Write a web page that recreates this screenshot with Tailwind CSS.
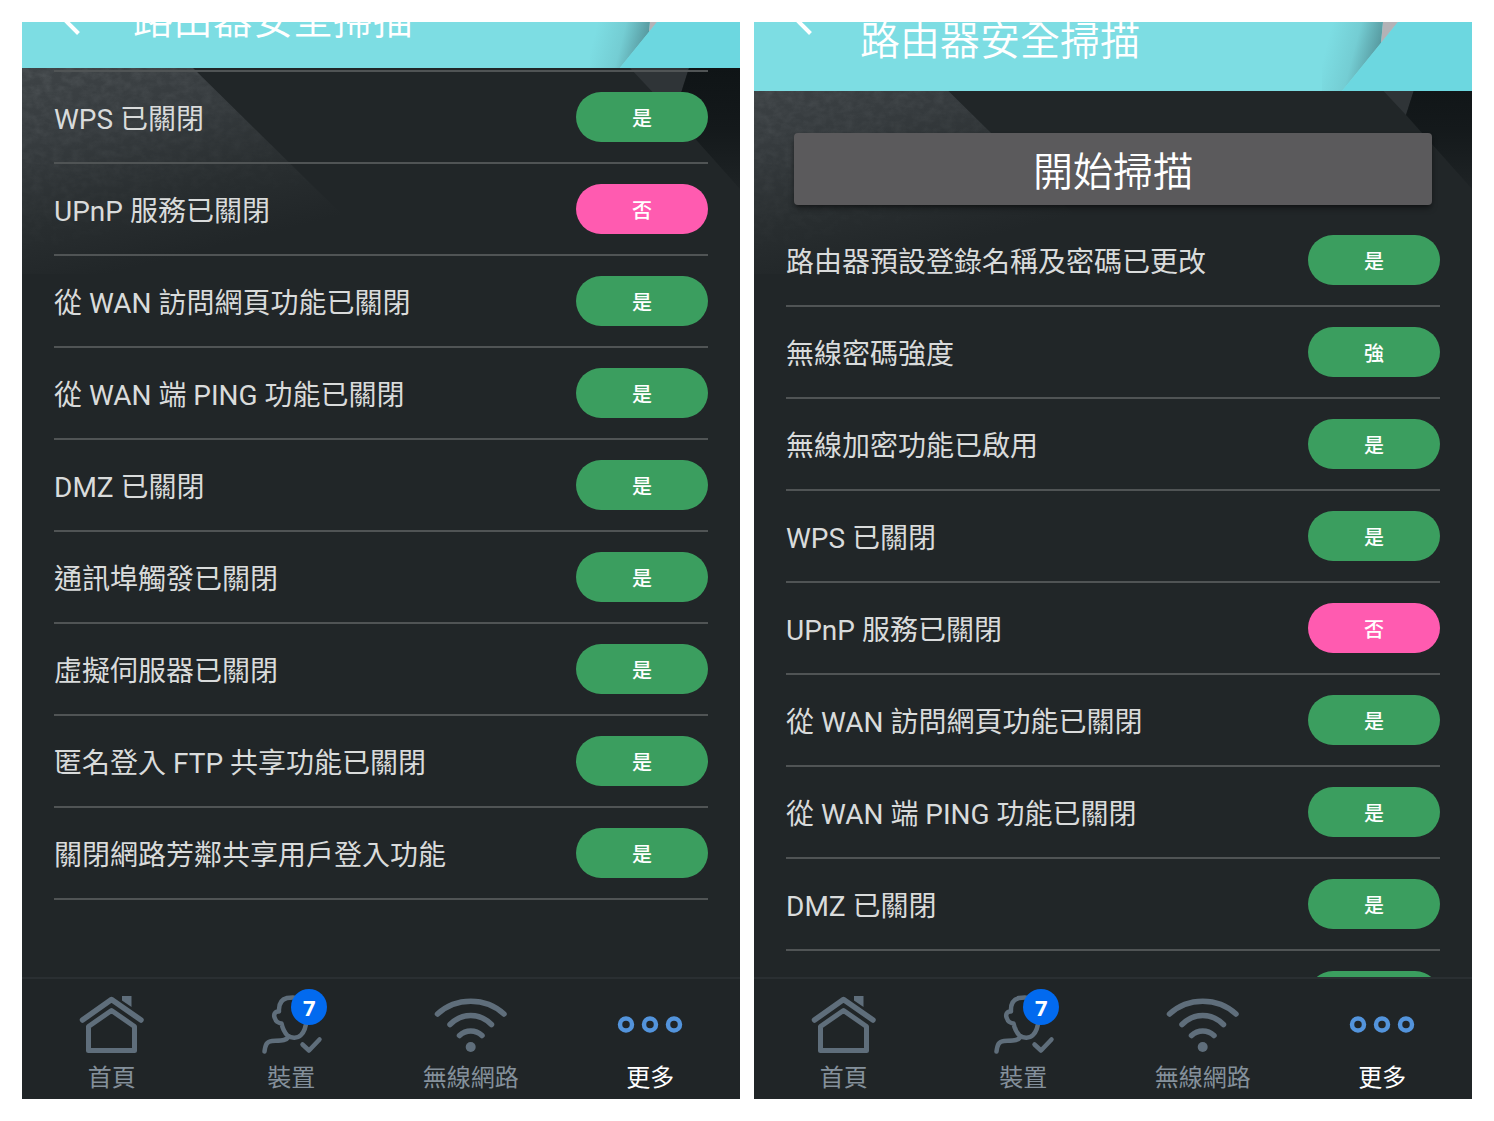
<!DOCTYPE html>
<html lang="zh-Hant">
<head>
<meta charset="utf-8">
<meta name="viewport" content="width=device-width, initial-scale=1">
<title>路由器安全掃描</title>
<script src="https://cdn.jsdelivr.net/npm/@tailwindcss/browser@4"></script>
</head>
<body class="bg-white font-[Roboto,'Noto_Sans_CJK_TC',sans-serif]">

<!-- Shared drawings -->
<svg class="absolute size-0" aria-hidden="true">
  <defs>
    <linearGradient id="sheen" gradientUnits="userSpaceOnUse" x1="0" y1="46" x2="54" y2="260">
      <stop offset="0" stop-color="#3e4346"/>
      <stop offset="0.35" stop-color="#363b3e"/>
      <stop offset="0.7" stop-color="#292e30"/>
      <stop offset="1" stop-color="#212628"/>
    </linearGradient>
    <linearGradient id="fade" gradientUnits="userSpaceOnUse" x1="0" y1="46" x2="54" y2="240">
      <stop offset="0" stop-color="#fff"/>
      <stop offset="1" stop-color="#fff" stop-opacity="0"/>
    </linearGradient>
    <linearGradient id="corner" x1="0" y1="0" x2="0" y2="1">
      <stop offset="0" stop-color="#0f1416"/>
      <stop offset="0.5" stop-color="#14191b"/>
      <stop offset="1" stop-color="#1e2325"/>
    </linearGradient>
    <linearGradient id="fold" gradientUnits="userSpaceOnUse" x1="8" y1="10" x2="62" y2="24">
      <stop offset="0" stop-color="#7ddde3"/>
      <stop offset="0.5" stop-color="#74cdd3"/>
      <stop offset="1" stop-color="#539298"/>
    </linearGradient>
    <!-- Fine stone grain, clipped to the shape it is applied to -->
    <filter id="grain" x="0" y="0" width="1" height="1">
      <feTurbulence type="fractalNoise" baseFrequency="0.1 0.14" numOctaves="4" seed="4"/>
      <feColorMatrix values="0 0 0 0 0.75  0 0 0 0 0.8  0 0 0 0 0.82  0.9 0 0 0 -0.3"/>
      <feComposite in2="SourceGraphic" operator="in"/>
    </filter>
    <symbol id="i-home" viewBox="0 0 80 64">
      <path d="M50 4h9.500v11l-9.500-6.500z" fill="currentColor"/>
      <g fill="none" stroke="currentColor" stroke-linecap="round" stroke-linejoin="round">
        <path stroke-width="5.500" d="M10.500 28 39.500 7.500 69 28"/>
        <path stroke-width="5" d="M16.500 58.500V34.500L39.500 18.500 62.500 34.500V58.500Z"/>
      </g>
    </symbol>
    <symbol id="i-user" viewBox="0 0 80 64">
      <g fill="none" stroke="currentColor" stroke-width="4.500" stroke-linecap="round" stroke-linejoin="round">
        <path d="M13.500 59.500C14.500 52 16 49.500 21 49 30 48.500 35 49 38 44.500"/>
        <path d="M53 8C48 5.500 42 5 36 6 30 7.500 27.500 12 28 19.500 24 19 22 22.500 24 26.500 25 30 27 31 30.500 31.500 31.500 36 33.500 40.500 36.500 43.500 40.500 46.500 46.500 46.500 50 43 53.500 39.500 55 35 55.500 28"/>
        <path d="M51.500 52.500 58 58.500 68.500 47.500"/>
      </g>
    </symbol>
    <symbol id="i-wifi" viewBox="0 0 80 64">
      <g fill="none" stroke="currentColor" stroke-width="5.500" stroke-linecap="round">
        <path d="M6.500 22C25 5 54.500 5 73 22"/>
        <path d="M19 32.500C31 20.500 48.500 20.500 60.500 32.500"/>
        <path d="M28.500 43.500C35 37.500 44.500 37.500 51 43.500"/>
      </g>
      <circle cx="39.700" cy="55" r="5" fill="currentColor"/>
    </symbol>
    <symbol id="i-more" viewBox="0 0 80 64">
      <g fill="none" stroke="currentColor" stroke-width="4.500">
        <circle cx="16" cy="32.500" r="6"/><circle cx="40" cy="32.500" r="6"/><circle cx="64" cy="32.500" r="6"/>
      </g>
    </symbol>
    <symbol id="slate" viewBox="0 0 718 1077">
      <path d="M0 46H171L348 220 380 252H0Z" fill="url(#sheen)"/>
      <path d="M0 46H171L348 220 380 252H0Z" fill="url(#fade)" filter="url(#grain)" opacity="0.18"/>
      <path d="M608 46H667L652 93Z" fill="#2f3437"/>
      <path d="M667 46H718V167L652 93Z" fill="url(#corner)"/>
    </symbol>
    <symbol id="banner" viewBox="0 0 150 69">
      <path d="M0 0H61L59 21 20 69H0Z" fill="url(#fold)"/>
      <path d="M61 0H76L59 21Z" fill="#b4b2b6"/>
      <path d="M76 0H150V69H20Z" fill="#6cd7e0"/>
    </symbol>
  </defs>
</svg>

<main class="grid h-screen grid-cols-2 gap-3.5 p-[22px]">

  <section class="relative isolate flex min-h-0 flex-col overflow-hidden bg-[#212628]">
    <svg class="absolute top-0 left-0 -z-10 w-full" viewBox="0 0 718 1077" aria-hidden="true"><use href="#slate"/></svg>
    <header class="relative flex h-[46px] shrink-0 items-start overflow-hidden bg-[#7ddde3] text-white">
      <svg class="absolute right-0 bottom-0 h-[46px] w-[150px]" viewBox="0 11 150 46" aria-hidden="true"><use href="#banner" width="150" height="69"/></svg>
      <a href="#" aria-label="返回" class="ml-8 block w-[79px]"><svg class="h-5 w-8" viewBox="0 0 32 20" fill="none" stroke="currentColor" stroke-width="4"><path d="M10-3 24.500 11.500"/></svg></a>
      <h1 class="relative -mt-[21px] text-[40px] leading-10 font-[350]">路由器安全掃描</h1>
    </header>
    <div class="min-h-0 flex-1 overflow-hidden">
      <ul class="mx-8 mt-0.5 border-t-2 border-[#505455] text-[28px] leading-9 text-[#d9dbdb]">
        <li class="flex h-[92px] items-center justify-between border-b-2 border-[#505455]"><span class="pt-1.5">WPS 已關閉</span><span class="flex h-[50px] w-[132px] items-center justify-center rounded-full bg-[#3b9e5f] pt-1 text-xl font-medium text-white">是</span></li>
        <li class="flex h-[92px] items-center justify-between border-b-2 border-[#505455]"><span class="pt-1.5">UPnP 服務已關閉</span><span class="flex h-[50px] w-[132px] items-center justify-center rounded-full bg-[#ff5bb0] pt-1 text-xl font-medium text-white">否</span></li>
        <li class="flex h-[92px] items-center justify-between border-b-2 border-[#505455]"><span class="pt-1.5">從 WAN 訪問網頁功能已關閉</span><span class="flex h-[50px] w-[132px] items-center justify-center rounded-full bg-[#3b9e5f] pt-1 text-xl font-medium text-white">是</span></li>
        <li class="flex h-[92px] items-center justify-between border-b-2 border-[#505455]"><span class="pt-1.5">從 WAN 端 PING 功能已關閉</span><span class="flex h-[50px] w-[132px] items-center justify-center rounded-full bg-[#3b9e5f] pt-1 text-xl font-medium text-white">是</span></li>
        <li class="flex h-[92px] items-center justify-between border-b-2 border-[#505455]"><span class="pt-1.5">DMZ 已關閉</span><span class="flex h-[50px] w-[132px] items-center justify-center rounded-full bg-[#3b9e5f] pt-1 text-xl font-medium text-white">是</span></li>
        <li class="flex h-[92px] items-center justify-between border-b-2 border-[#505455]"><span class="pt-1.5">通訊埠觸發已關閉</span><span class="flex h-[50px] w-[132px] items-center justify-center rounded-full bg-[#3b9e5f] pt-1 text-xl font-medium text-white">是</span></li>
        <li class="flex h-[92px] items-center justify-between border-b-2 border-[#505455]"><span class="pt-1.5">虛擬伺服器已關閉</span><span class="flex h-[50px] w-[132px] items-center justify-center rounded-full bg-[#3b9e5f] pt-1 text-xl font-medium text-white">是</span></li>
        <li class="flex h-[92px] items-center justify-between border-b-2 border-[#505455]"><span class="pt-1.5">匿名登入 FTP 共享功能已關閉</span><span class="flex h-[50px] w-[132px] items-center justify-center rounded-full bg-[#3b9e5f] pt-1 text-xl font-medium text-white">是</span></li>
        <li class="flex h-[92px] items-center justify-between border-b-2 border-[#505455]"><span class="pt-1.5">關閉網路芳鄰共享用戶登入功能</span><span class="flex h-[50px] w-[132px] items-center justify-center rounded-full bg-[#3b9e5f] pt-1 text-xl font-medium text-white">是</span></li>
      </ul>
    </div>
    <nav class="grid h-[122px] shrink-0 grid-cols-4 border-t-2 border-[#2a2f32] bg-[#202527] pt-[13px] text-2xl leading-8 text-[#84909b]">
      <a href="#" class="flex flex-col items-center gap-1.5"><svg class="h-16 w-20 text-[#5f6e7b]" aria-hidden="true"><use href="#i-home"/></svg><span>首頁</span></a>
      <a href="#" class="flex flex-col items-center gap-1.5"><span class="relative"><svg class="h-16 w-20 text-[#5f6e7b]" aria-hidden="true"><use href="#i-user"/></svg><span class="absolute -top-[3px] left-10 flex size-9 items-center justify-center rounded-full bg-[#026aef] font-['Open_Sans',sans-serif] text-[22px] font-bold text-white">7</span></span><span>裝置</span></a>
      <a href="#" class="flex flex-col items-center gap-1.5"><svg class="h-16 w-20 text-[#5f6e7b]" aria-hidden="true"><use href="#i-wifi"/></svg><span>無線網路</span></a>
      <a href="#" aria-current="page" class="flex flex-col items-center gap-1.5 text-white"><svg class="h-16 w-20 text-[#5394dc]" aria-hidden="true"><use href="#i-more"/></svg><span>更多</span></a>
    </nav>
  </section>

  <section class="relative isolate flex min-h-0 flex-col overflow-hidden bg-[#212628]">
    <svg class="absolute top-0 left-0 -z-10 w-full" viewBox="0 0 718 1077" aria-hidden="true"><use href="#slate"/></svg>
    <header class="relative flex h-[69px] shrink-0 items-start overflow-hidden bg-[#7ddde3] text-white">
      <svg class="absolute right-0 bottom-0 h-[69px] w-[150px]" viewBox="0 0 150 69" aria-hidden="true"><use href="#banner" width="150" height="69"/></svg>
      <a href="#" aria-label="返回" class="ml-8 block w-[74px]"><svg class="h-5 w-8" viewBox="0 0 32 20" fill="none" stroke="currentColor" stroke-width="4"><path d="M10-3 24.500 11.500"/></svg></a>
      <h1 class="relative text-[40px] leading-10 font-[350]">路由器安全掃描</h1>
    </header>
    <div class="flex min-h-0 flex-1 flex-col overflow-hidden">
      <button type="button" class="mx-10 mt-[42px] mb-2.5 h-[72px] shrink-0 rounded-sm bg-[#5b5a5c] pt-2 text-[40px] leading-[48px] font-[350] text-white shadow-md shadow-black/40">開始掃描</button>
      <ul class="mx-8 shrink-0 text-[28px] leading-9 text-[#d9dbdb]">
        <li class="flex h-[92px] items-center justify-between border-b-2 border-[#505455]"><span class="pt-1.5">路由器預設登錄名稱及密碼已更改</span><span class="flex h-[50px] w-[132px] items-center justify-center rounded-full bg-[#3b9e5f] pt-1 text-xl font-medium text-white">是</span></li>
        <li class="flex h-[92px] items-center justify-between border-b-2 border-[#505455]"><span class="pt-1.5">無線密碼強度</span><span class="flex h-[50px] w-[132px] items-center justify-center rounded-full bg-[#3b9e5f] pt-1 text-xl font-medium text-white">強</span></li>
        <li class="flex h-[92px] items-center justify-between border-b-2 border-[#505455]"><span class="pt-1.5">無線加密功能已啟用</span><span class="flex h-[50px] w-[132px] items-center justify-center rounded-full bg-[#3b9e5f] pt-1 text-xl font-medium text-white">是</span></li>
        <li class="flex h-[92px] items-center justify-between border-b-2 border-[#505455]"><span class="pt-1.5">WPS 已關閉</span><span class="flex h-[50px] w-[132px] items-center justify-center rounded-full bg-[#3b9e5f] pt-1 text-xl font-medium text-white">是</span></li>
        <li class="flex h-[92px] items-center justify-between border-b-2 border-[#505455]"><span class="pt-1.5">UPnP 服務已關閉</span><span class="flex h-[50px] w-[132px] items-center justify-center rounded-full bg-[#ff5bb0] pt-1 text-xl font-medium text-white">否</span></li>
        <li class="flex h-[92px] items-center justify-between border-b-2 border-[#505455]"><span class="pt-1.5">從 WAN 訪問網頁功能已關閉</span><span class="flex h-[50px] w-[132px] items-center justify-center rounded-full bg-[#3b9e5f] pt-1 text-xl font-medium text-white">是</span></li>
        <li class="flex h-[92px] items-center justify-between border-b-2 border-[#505455]"><span class="pt-1.5">從 WAN 端 PING 功能已關閉</span><span class="flex h-[50px] w-[132px] items-center justify-center rounded-full bg-[#3b9e5f] pt-1 text-xl font-medium text-white">是</span></li>
        <li class="flex h-[92px] items-center justify-between border-b-2 border-[#505455]"><span class="pt-1.5">DMZ 已關閉</span><span class="flex h-[50px] w-[132px] items-center justify-center rounded-full bg-[#3b9e5f] pt-1 text-xl font-medium text-white">是</span></li>
        <li class="flex h-[92px] items-center justify-end border-b-2 border-[#505455]"><span class="h-[50px] w-[132px] rounded-full bg-[#3b9e5f]"></span></li>
      </ul>
    </div>
    <nav class="grid h-[122px] shrink-0 grid-cols-4 border-t-2 border-[#2a2f32] bg-[#202527] pt-[13px] text-2xl leading-8 text-[#84909b]">
      <a href="#" class="flex flex-col items-center gap-1.5"><svg class="h-16 w-20 text-[#5f6e7b]" aria-hidden="true"><use href="#i-home"/></svg><span>首頁</span></a>
      <a href="#" class="flex flex-col items-center gap-1.5"><span class="relative"><svg class="h-16 w-20 text-[#5f6e7b]" aria-hidden="true"><use href="#i-user"/></svg><span class="absolute -top-[3px] left-10 flex size-9 items-center justify-center rounded-full bg-[#026aef] font-['Open_Sans',sans-serif] text-[22px] font-bold text-white">7</span></span><span>裝置</span></a>
      <a href="#" class="flex flex-col items-center gap-1.5"><svg class="h-16 w-20 text-[#5f6e7b]" aria-hidden="true"><use href="#i-wifi"/></svg><span>無線網路</span></a>
      <a href="#" aria-current="page" class="flex flex-col items-center gap-1.5 text-white"><svg class="h-16 w-20 text-[#5394dc]" aria-hidden="true"><use href="#i-more"/></svg><span>更多</span></a>
    </nav>
  </section>

</main>
</body>
</html>
